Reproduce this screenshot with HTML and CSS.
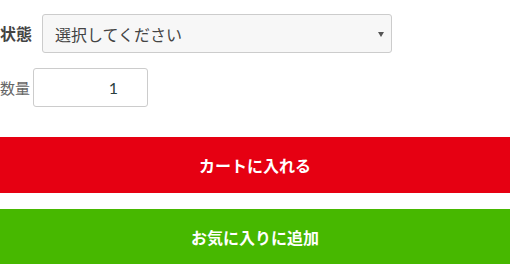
FILE: index.html
```html
<!DOCTYPE html>
<html lang="ja">
<head>
<meta charset="utf-8">
<link rel="stylesheet" href="styles.css">
</head>
<body>
<div class="form">
  <div class="row row-state">
    <label class="label label-bold">状態</label>
    <div class="select">
      <span class="select-text">選択してください</span>
      <span class="arrow"></span>
    </div>
  </div>
  <div class="row row-qty">
    <label class="label label-light">数量</label>
    <div class="qty">1</div>
  </div>
  <div class="btn btn-cart">カートに入れる</div>
  <div class="btn btn-fav">お気に入りに追加</div>
</div>
</body>
</html>
```
FILE: styles.css
```css
html, body {
  margin: 0;
  padding: 0;
  background: #fff;
}
body {
  font-family: Lato, "Noto Sans CJK JP", sans-serif;
  width: 510px;
  height: 264px;
  overflow: hidden;
}
.form {
  display: flex;
  flex-direction: column;
  padding-top: 14px;
}
.row {
  display: flex;
  align-items: center;
}
.row-qty {
  margin-top: 15px;
}
.label {
  line-height: 20px;
}
.label-bold {
  font-weight: bold;
  color: #444;
  width: 42px;
  font-size: 16px;
}
.label-light {
  color: #666;
  width: 33px;
  font-size: 15px;
}
.select {
  box-sizing: border-box;
  width: 350px;
  height: 39px;
  border: 1px solid #ccc;
  border-radius: 3px;
  background: #f7f7f7;
  display: flex;
  align-items: center;
  justify-content: space-between;
  padding: 0 7px 0 12px;
}
.select-text {
  font-size: 16px;
  color: #444;
}
.arrow {
  width: 0;
  height: 0;
  border-left: 3px solid transparent;
  border-right: 3px solid transparent;
  border-top: 5px solid #555;
  margin-top: 1px;
}
.qty {
  box-sizing: border-box;
  width: 115px;
  height: 39px;
  border: 1px solid #ccc;
  border-radius: 3px;
  background: #fff;
  display: flex;
  align-items: center;
  justify-content: flex-end;
  padding-right: 29px;
  font-family: Lato, sans-serif;
  font-size: 16px;
  color: #2a3f3f;
}
.btn {
  height: 56px;
  display: flex;
  align-items: center;
  justify-content: center;
  color: #fff;
  font-weight: bold;
  font-size: 16px;
}
.btn-cart {
  margin-top: 30px;
  background: #e60012;
}
.btn-fav {
  margin-top: 16px;
  background: #47b800;
}
```
